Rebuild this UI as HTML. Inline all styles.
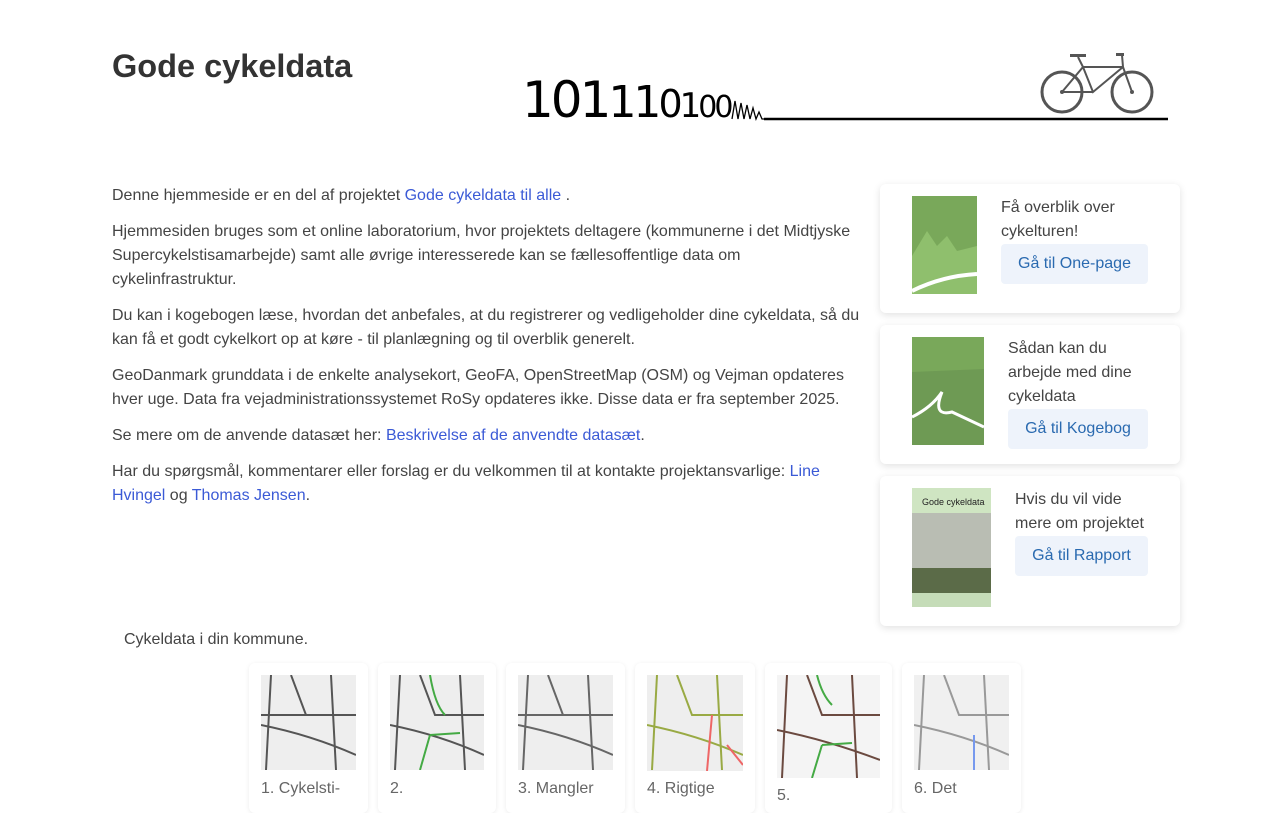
<!DOCTYPE html>
<html><head><meta charset="utf-8"><style>
body{margin:0;background:#fff;font-family:"Liberation Sans",sans-serif;color:#444;width:1280px;height:800px;overflow:hidden;position:relative}
.a{position:absolute}
h1{position:absolute;left:112px;top:48px;margin:0;font-size:32.5px;font-weight:bold;color:#333}
p{margin:0 0 12px 0;font-size:16px;line-height:24px}
a{color:#3b5ad6;text-decoration:none}
.card{position:absolute;left:880px;width:300px;background:#fff;border-radius:6px;box-shadow:0 2px 8px rgba(0,0,0,.12)}
.card .t{position:absolute;font-size:16px;line-height:24px;color:#444}
.btn{position:absolute;left:0;background:#eef3fb;color:#2a6ab0;font-size:16px;height:40px;line-height:40px;text-align:center;border-radius:4px}
.cov{position:absolute;left:32px;background:#79a85a}
.mc{position:absolute;top:663px;height:150px;background:#fff;border-radius:6px;box-shadow:0 1px 5px rgba(0,0,0,.08)}
.mc svg{position:absolute;left:12px;top:12px}
.mc .l{position:absolute;left:12px;font-size:16px;color:#666}
</style></head><body>
<h1>Gode cykeldata</h1>
<div class="a" style="left:522px;top:72px;font-size:50px;line-height:56px;color:#000;font-family:'DejaVu Sans','Liberation Sans',sans-serif;letter-spacing:-3px;white-space:nowrap"><span style="font-size:50px">101</span><span style="font-size:44px">11</span><span style="font-size:38px">0</span><span style="font-size:34px">1</span><span style="font-size:30px">00</span></div>
<svg class="a" style="left:730px;top:95px" width="440" height="30"><path d="M2 24 L5 6 L8 24 L11 8 L14 24 L17 10 L20 24 L23 13 L26 24 L29 17 L32 24 L35 24" fill="none" stroke="#000" stroke-width="1.3"/><line x1="34" y1="24" x2="438" y2="24" stroke="#000" stroke-width="2.5"/></svg>
<svg class="a" style="left:1038px;top:50px" width="118" height="68"><g fill="none" stroke="#555"><circle cx="24" cy="42" r="20" stroke-width="3"/><circle cx="94" cy="42" r="20" stroke-width="3"/><path d="M24 42 L45 17 L85 17 L94 42 M45 17 L55 42 L85 17 M24 42 L55 42 M40 7 L45 17 M84 5 L85 17" stroke-width="2"/></g><path d="M32 4 h16 v3 h-16z M78 3 h8 v3 h-8z" fill="#555"/><circle cx="24" cy="42" r="2" fill="#555"/><circle cx="94" cy="42" r="2" fill="#555"/></svg>
<div class="a" style="left:112px;top:184px;width:752px">
<p>Denne hjemmeside er en del af projektet <a>Gode cykeldata til alle</a> .</p>
<p>Hjemmesiden bruges som et online laboratorium, hvor projektets deltagere (kommunerne i det Midtjyske Supercykelstisamarbejde) samt alle øvrige interesserede kan se fællesoffentlige data om cykelinfrastruktur.</p>
<p>Du kan i kogebogen læse, hvordan det anbefales, at du registrerer og vedligeholder dine cykeldata, så du kan få et godt cykelkort op at køre - til planlægning og til overblik generelt.</p>
<p>GeoDanmark grunddata i de enkelte analysekort, GeoFA, OpenStreetMap (OSM) og Vejman opdateres hver uge. Data fra vejadministrationssystemet RoSy opdateres ikke. Disse data er fra september 2025.</p>
<p>Se mere om de anvende datasæt her: <a>Beskrivelse af de anvendte datasæt</a>.</p>
<p>Har du spørgsmål, kommentarer eller forslag er du velkommen til at kontakte projektansvarlige: <a>Line Hvingel</a> og <a>Thomas Jensen</a>.</p>
</div>
<div class="card" style="top:184px;height:129px"><div class="cov" style="top:12px;width:65px;height:98px"><svg width="65" height="98"><path d="M0 60 L15 35 L25 50 L35 40 L45 55 L65 50 V98 H0z" fill="#8fbf6d"/><path d="M0 95 Q30 80 65 78" stroke="#fff" stroke-width="4" fill="none"/></svg></div>
<div class="t" style="left:121px;top:12px">Få overblik over<br>cykelturen!</div><div class="btn" style="left:121px;top:60px;width:147px">Gå til One-page</div></div>
<div class="card" style="top:325px;height:139px"><div class="cov" style="top:12px;width:72px;height:108px"><svg width="72" height="108"><path d="M0 35 L72 32 V108 H0z" fill="#6e9a54"/><path d="M0 80 Q20 70 30 55 Q20 80 40 75 L72 90" stroke="#fff" stroke-width="3" fill="none"/></svg></div>
<div class="t" style="left:128px;top:12px">Sådan kan du<br>arbejde med dine<br>cykeldata</div><div class="btn" style="left:128px;top:84px;width:140px">Gå til Kogebog</div></div>
<div class="card" style="top:476px;height:150px"><div class="cov" style="top:12px;width:79px;height:119px;background:#8a8f80"><svg width="79" height="119"><rect width="79" height="25" fill="#cfe5c2"/><text x="10" y="17" font-size="9" fill="#222" font-family="Liberation Sans">Gode cykeldata</text><rect y="25" width="79" height="55" fill="#b9bdb3"/><rect y="80" width="79" height="25" fill="#5b6b48"/><rect y="105" width="79" height="14" fill="#c5dcb8"/></svg></div>
<div class="t" style="left:135px;top:12px">Hvis du vil vide<br>mere om projektet</div><div class="btn" style="left:135px;top:60px;width:133px">Gå til Rapport</div></div>
<div class="a" style="left:124px;top:628px;font-size:16px;line-height:24px">Cykeldata i din kommune.</div>
<div class="mc" style="left:249px;width:119px"><svg width="95" height="95"><rect width="95" height="95" fill="#eee"/><path d="M10 0 L5 95 M30 0 L45 40 L95 40 M0 50 Q50 60 95 80 M70 0 L75 95 M0 40 H95" stroke="#555" stroke-width="2" fill="none"/></svg><div class="l" style="top:117px">1. Cykelsti-</div></div>
<div class="mc" style="left:378px;width:118px"><svg width="94" height="95"><rect width="94" height="95" fill="#eee"/><path d="M10 0 L5 95 M30 0 L45 40 L94 40 M0 50 Q50 60 94 80 M70 0 L75 95" stroke="#555" stroke-width="2" fill="none"/><path d="M40 0 Q45 30 55 40 M40 60 L70 58 M40 60 L30 95" stroke="#4a4" stroke-width="2" fill="none"/></svg><div class="l" style="top:117px">2.</div></div>
<div class="mc" style="left:506px;width:119px"><svg width="95" height="95"><rect width="95" height="95" fill="#eee"/><path d="M10 0 L5 95 M30 0 L45 40 L95 40 M0 50 Q50 60 95 80 M70 0 L75 95 M0 40 H95" stroke="#666" stroke-width="2" fill="none"/></svg><div class="l" style="top:117px">3. Mangler</div></div>
<div class="mc" style="left:635px;width:120px"><svg width="96" height="96"><rect width="96" height="96" fill="#eee"/><path d="M10 0 L5 95 M30 0 L45 40 L96 40 M0 50 Q50 60 96 80 M70 0 L75 95" stroke="#9a4" stroke-width="2" fill="none"/><path d="M65 40 L60 96 M80 70 L96 90" stroke="#e66" stroke-width="2" fill="none"/></svg><div class="l" style="top:117px">4. Rigtige</div></div>
<div class="mc" style="left:765px;width:127px"><svg width="103" height="103"><rect width="103" height="103" fill="#f4f4f4"/><path d="M10 0 L5 103 M30 0 L45 40 L103 40 M0 55 Q50 65 103 85 M75 0 L80 103" stroke="#6b4a40" stroke-width="2" fill="none"/><path d="M40 0 Q45 20 55 30 M45 70 L75 68 M45 70 L35 103" stroke="#4a4" stroke-width="2" fill="none"/></svg><div class="l" style="top:124px">5.</div></div>
<div class="mc" style="left:902px;width:119px"><svg width="95" height="95"><rect width="95" height="95" fill="#f0f0f0"/><path d="M10 0 L5 95 M30 0 L45 40 L95 40 M0 50 Q50 60 95 80 M70 0 L75 95" stroke="#999" stroke-width="2" fill="none"/><path d="M60 60 L60 95" stroke="#79e" stroke-width="2"/></svg><div class="l" style="top:117px">6. Det</div></div>
</body></html>
